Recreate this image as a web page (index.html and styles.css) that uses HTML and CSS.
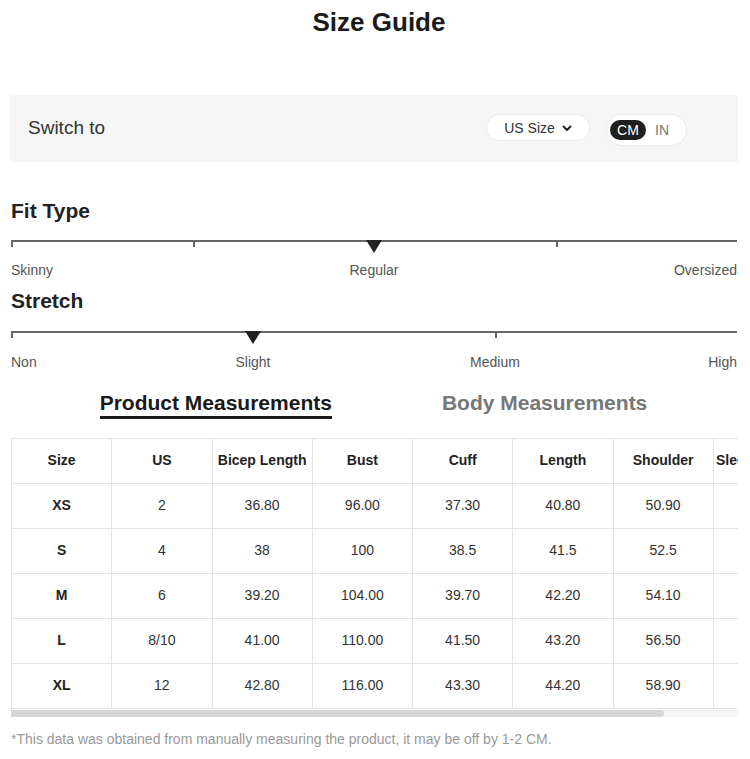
FILE: index.html
```html
<!DOCTYPE html>
<html>
<head>
<meta charset="utf-8">
<link rel="stylesheet" href="styles.css">
</head>
<body>
<div class="page">
  <h1 class="title">Size Guide</h1>

  <div class="switch-panel">
    <span class="switch-label">Switch to</span>
    <div class="switch-controls">
      <div class="size-select">US Size
        <svg class="chev" width="10" height="7" viewBox="0 0 10 7"><path d="M1.5 1.5 L5 5 L8.5 1.5" fill="none" stroke="#222" stroke-width="2" stroke-linecap="round" stroke-linejoin="round"/></svg>
      </div>
      <div class="unit-toggle">
        <span class="unit active">CM</span>
        <span class="unit">IN</span>
      </div>
    </div>
  </div>

  <section class="scale">
    <h2 class="scale-title">Fit Type</h2>
    <div class="bar bar-4">
      <span class="seg"></span><span class="seg"></span><span class="seg"></span><span class="seg"></span>
      <span class="marker" style="left: 50%"></span>
    </div>
    <div class="labels labels-4">
      <span class="l-start">Skinny</span>
      <span class="l-mid">Regular</span>
      <span class="l-end">Oversized</span>
    </div>
  </section>

  <section class="scale">
    <h2 class="scale-title">Stretch</h2>
    <div class="bar bar-3">
      <span class="seg"></span><span class="seg"></span><span class="seg"></span>
      <span class="marker" style="left: 33.333%"></span>
    </div>
    <div class="labels labels-6">
      <span class="l-start">Non</span>
      <span class="l-mid">Slight</span>
      <span class="l-mid">Medium</span>
      <span class="l-end">High</span>
    </div>
  </section>

  <div class="tabs">
    <span class="tab active">Product Measurements</span>
    <span class="tab">Body Measurements</span>
  </div>

  <div class="table-wrap">
    <table class="size-table">
      <thead>
        <tr><th>Size</th><th>US</th><th>Bicep Length</th><th>Bust</th><th>Cuff</th><th>Length</th><th>Shoulder</th><th>Sleeve Length</th></tr>
      </thead>
      <tbody>
        <tr><th>XS</th><td>2</td><td>36.80</td><td>96.00</td><td>37.30</td><td>40.80</td><td>50.90</td><td>58.40</td></tr>
        <tr><th>S</th><td>4</td><td>38</td><td>100</td><td>38.5</td><td>41.5</td><td>52.5</td><td>59</td></tr>
        <tr><th>M</th><td>6</td><td>39.20</td><td>104.00</td><td>39.70</td><td>42.20</td><td>54.10</td><td>59.60</td></tr>
        <tr><th>L</th><td>8/10</td><td>41.00</td><td>110.00</td><td>41.50</td><td>43.20</td><td>56.50</td><td>60.50</td></tr>
        <tr><th>XL</th><td>12</td><td>42.80</td><td>116.00</td><td>43.30</td><td>44.20</td><td>58.90</td><td>61.40</td></tr>
      </tbody>
    </table>
  </div>
  <div class="scroll-track"><div class="scroll-thumb" style="width: 89.8%"></div></div>

  <p class="note">*This data was obtained from manually measuring the product, it may be off by 1-2 CM.</p>
</div>
</body>
</html>
```
FILE: styles.css
```css
* { box-sizing: border-box; }
html, body { margin: 0; padding: 0; background: #fff; }
body {
  font-family: "Liberation Sans", Arial, sans-serif;
  color: #222;
  width: 750px;
  overflow: hidden;
}
.page { padding: 0 10px 0 11px; }

.title {
  margin: 0;
  padding: 7px 0 0 7px;
  font-size: 26px;
  line-height: 30px;
  font-weight: bold;
  text-align: center;
  color: #1a1a1a;
}

.switch-panel {
  margin: 58px 2px 0 -1px;
  height: 67px;
  background: #f6f6f6;
  display: flex;
  align-items: center;
  justify-content: space-between;
  padding: 0 52px 2px 18px;
}
.switch-label { font-size: 19px; color: #333; }
.switch-controls { display: flex; align-items: center; gap: 18px; }
.size-select {
  height: 25px;
  width: 102px;
  background: #fff;
  border-radius: 13px;
  box-shadow: 0 0 0 1px #ececec;
  display: flex;
  align-items: center;
  justify-content: center;
  gap: 7px;
  font-size: 14px;
  color: #333;
}
.chev { display: block; margin-top: 1px; }
.unit-toggle {
  height: 30px;
  width: 79px;
  background: #fff;
  border-radius: 15px;
  box-shadow: 0 0 0 1px #ececec;
  display: flex;
  align-items: center;
  padding: 0 3px;
  gap: 9px;
  margin-top: 4px;
}
.unit { font-size: 14px; color: #777; }
.unit.active {
  background: #1f1f1f;
  color: #fff;
  width: 36px;
  height: 20px;
  border-radius: 10px;
  display: flex;
  align-items: center;
  justify-content: center;
}

.scale { margin-right: 3px; }
.scale-title {
  margin: 0;
  font-size: 21px;
  line-height: 24px;
  font-weight: bold;
  color: #222;
}
.scale:first-of-type .scale-title { margin-top: 37px; }
.scale + .scale .scale-title { margin-top: 11px; }
.bar {
  position: relative;
  display: flex;
  margin-top: 17px;
  height: 7px;
  border-top: 2px solid #666;
}
.scale + .scale .bar { margin-top: 18px; }
.seg { flex: 1; border-left: 2px solid #666; }
.seg:last-of-type { border-right: 2px solid #666; }
.marker {
  position: absolute;
  top: -2px;
  width: 0; height: 0;
  margin-left: -8px;
  border-left: 8px solid transparent;
  border-right: 8px solid transparent;
  border-top: 13px solid #222;
}
.labels {
  display: grid;
  margin-top: 15px;
  font-size: 14px;
  line-height: 16px;
  color: #555;
}
.scale + .scale .labels { margin-top: 16px; }
.labels-4 { grid-template-columns: repeat(4, 1fr); }
.labels-6 { grid-template-columns: repeat(6, 1fr); }
.l-start { justify-self: start; }
.l-end { justify-self: end; }
.l-mid { grid-column: span 2; justify-self: center; }
.labels-4 .l-end { grid-column: 4; }
.labels-6 .l-end { grid-column: 6; }

.tabs {
  display: flex;
  justify-content: center;
  gap: 110px;
  margin-top: 21px;
  padding-right: 4px;
}
.tab {
  font-size: 21px;
  font-weight: bold;
  line-height: 24px;
  color: #777;
  padding-bottom: 1px;
  border-bottom: 3px solid transparent;
}
.tab.active { color: #1a1a1a; border-bottom-color: #1a1a1a; }

.table-wrap {
  margin-top: 19px;
  margin-right: 2px;
  overflow: hidden;
}
.size-table {
  border-collapse: collapse;
  table-layout: fixed;
  width: 802px;
  font-size: 14px;
}
.size-table th, .size-table td {
  width: 100.25px;
  height: 45px;
  border: 1px solid #e4e4e4;
  text-align: center;
  white-space: nowrap;
  overflow: hidden;
  padding: 0 0 2px;
}
.size-table th { font-weight: bold; color: #222; }
.size-table td { color: #333; }

.scroll-track {
  margin: 1px 2px 0 0;
  height: 7px;
  background: #f5f5f5;
}
.scroll-thumb {
  height: 100%;
  background: #d6d6d6;
  border-radius: 0 3px 3px 0;
}

.note {
  margin: 14px 0 0;
  font-size: 14px;
  color: #999;
}
```
